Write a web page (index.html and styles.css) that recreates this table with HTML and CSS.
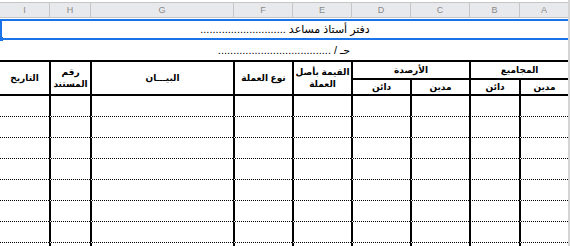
FILE: index.html
```html
<!DOCTYPE html>
<html lang="ar">
<head>
  <meta charset="UTF-8" />
  <meta name="viewport" content="width=device-width, initial-scale=1.0"/>
  <title>دفتر أستاذ مساعد</title>
  <link rel="stylesheet" href="styles.css">
</head>
<body>
  <div class="sheet" dir="rtl">
    <div class="cols col-heads">
      <span>A</span><span>B</span><span>C</span><span>D</span><span>E</span><span>F</span><span>G</span><span>H</span><span>I</span>
    </div>

    <div class="title selected">دفتر أستاذ مساعد ............................</div>
    <div class="title">حـ / .....................................</div>

    <div class="cols ledger">
      <div class="head group">المجاميع</div>
      <div class="head group">الأرصدة</div>
      <div class="head tall">القيمة بأصل<br>العملة</div>
      <div class="head tall">نوع العملة</div>
      <div class="head tall">البيـــان</div>
      <div class="head tall">رقم<br>المستند</div>
      <div class="head tall last">التاريخ</div>
      <div class="head sub">مدين</div>
      <div class="head sub">دائن</div>
      <div class="head sub">مدين</div>
      <div class="head sub">دائن</div>

      <div class="row"><span></span><span></span><span></span><span></span><span></span><span></span><span></span><span></span><span></span></div>
      <div class="row"><span></span><span></span><span></span><span></span><span></span><span></span><span></span><span></span><span></span></div>
      <div class="row"><span></span><span></span><span></span><span></span><span></span><span></span><span></span><span></span><span></span></div>
      <div class="row"><span></span><span></span><span></span><span></span><span></span><span></span><span></span><span></span><span></span></div>
      <div class="row"><span></span><span></span><span></span><span></span><span></span><span></span><span></span><span></span><span></span></div>
      <div class="row"><span></span><span></span><span></span><span></span><span></span><span></span><span></span><span></span><span></span></div>
      <div class="row"><span></span><span></span><span></span><span></span><span></span><span></span><span></span><span></span><span></span></div>
      <div class="row"><span></span><span></span><span></span><span></span><span></span><span></span><span></span><span></span><span></span></div>
    </div>
  </div>
</body>
</html>
```

FILE: styles.css
```css
* {
  margin: 0;
  padding: 0;
  box-sizing: border-box;
}

body {
  background: #fff;
  font-family: "Liberation Sans", "DejaVu Sans", sans-serif;
  color: #000;
}

.sheet {
  width: 570px;
  height: 246px;
  overflow: hidden;
  border-right: 2px solid #d4d4d4;
}

/* column widths, A on the right */
.cols {
  display: grid;
  grid-template-columns: 49px 50px 59px 59px 59px 59px 143px 41px 49px;
}

.col-heads {
  margin-top: 2px;
  height: 16px;
  background: #e8e9ec;
  border-top: 1px solid #c6c6c6;
  border-bottom: 1px solid #c6c6c6;
}

.col-heads span {
  border-left: 1px solid #c6c6c6;
  font-size: 9px;
  line-height: 14px;
  color: #8a8a8a;
  text-align: center;
}

.col-heads span:last-child {
  border-left: none;
}

.title {
  height: 20px;
  font-size: 11px;
  line-height: 20px;
  text-align: center;
  white-space: nowrap;
}

.title.selected {
  position: relative;
  margin-top: 1px;
  height: 21px;
  line-height: 17px;
  border-top: 2px solid #1a73e8;
  border-bottom: 2px solid #1a73e8;
  border-left: 2px solid #1a73e8;
}

/* fill handle of the selected cell */
.title.selected::after {
  content: "";
  position: absolute;
  left: -2px;
  bottom: -3px;
  width: 3px;
  height: 4px;
  background: #1a73e8;
}

.ledger {
  border-top: 2px solid #000;
  grid-template-rows: 18px 16px repeat(8, 21px);
}

.head {
  display: flex;
  align-items: center;
  justify-content: center;
  text-align: center;
  font-size: 9px;
  font-weight: bold;
  line-height: 12px;
  border-left: 2px solid #000;
  border-bottom: 2px solid #000;
}

.head.group {
  grid-column: span 2;
}

.head.tall {
  grid-row: span 2;
}

.head.last {
  border-left: none;
}

.row {
  display: contents;
}

.row span {
  border-left: 2px solid #000;
  border-bottom: 1px dotted #000;
}

.row span:last-child {
  border-left: none;
}
```
